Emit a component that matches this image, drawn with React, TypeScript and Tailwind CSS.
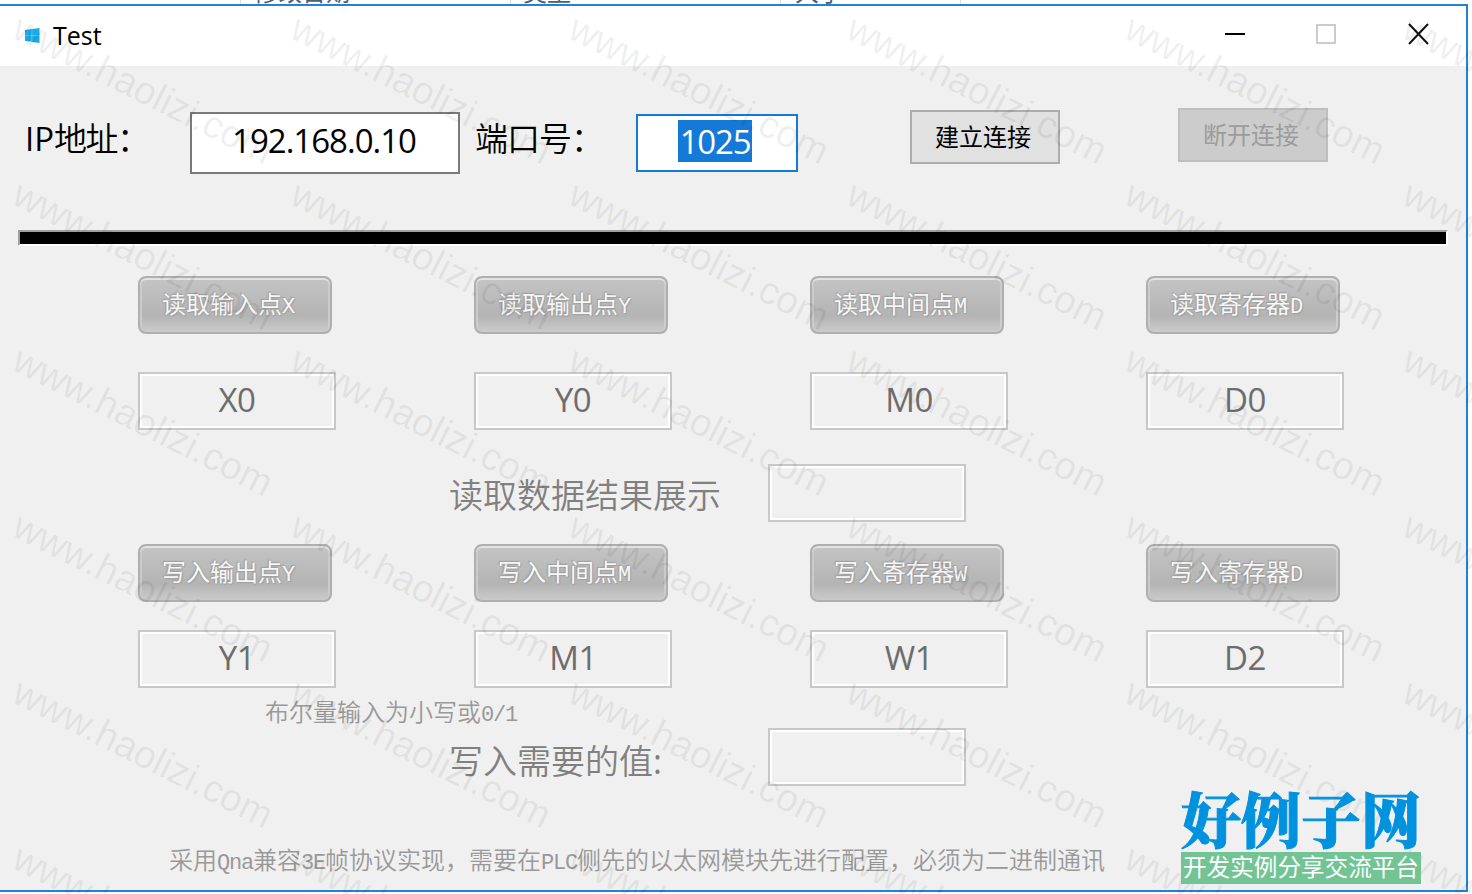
import { FC, ReactNode } from 'react';

interface Register {
  action: string;
  suffix: string;
  address: string;
}

const readRegisters: Register[] = [
  { action: '读取输入点', suffix: 'X', address: 'X0' },
  { action: '读取输出点', suffix: 'Y', address: 'Y0' },
  { action: '读取中间点', suffix: 'M', address: 'M0' },
  { action: '读取寄存器', suffix: 'D', address: 'D0' },
];

const writeRegisters: Register[] = [
  { action: '写入输出点', suffix: 'Y', address: 'Y1' },
  { action: '写入中间点', suffix: 'M', address: 'M1' },
  { action: '写入寄存器', suffix: 'W', address: 'W1' },
  { action: '写入寄存器', suffix: 'D', address: 'D2' },
];

const columns = [0, 1, 2, 3, 4, 5];
const rows = [0, 1, 2, 3, 4, 5];

// half-width latin characters, 12px each
const Half: FC<{ children: ReactNode }> = ({ children }) => (
  <span className="font-['Liberation_Mono',monospace] text-[22px] tracking-[-1.2px]">{children}</span>
);

const GlossyButton: FC<{ item: Register }> = ({ item }) => (
  <button
    type="button"
    disabled
    className="flex h-[58px] w-[194px] items-center rounded-lg border-2 border-[#afafaf] bg-linear-to-b from-[#c4c4c4] via-[#b4b4b4] via-70% to-[#cbcbcb] pl-[22px] text-2xl leading-6 whitespace-nowrap text-[#f7f7f7] shadow-[inset_0_2px_0_#e2e2e2,inset_2px_0_0_#cbcbcb,inset_-2px_0_0_#cbcbcb] text-shadow-[0_0_2px_#999,1px_1px_1px_#a2a2a2,-1px_-1px_1px_#a2a2a2]"
  >
    <span className="mt-0.5">
      {item.action}
      <Half>{item.suffix}</Half>
    </span>
  </button>
);

const DisabledField: FC<{ label: string; value?: string }> = ({ label, value = '' }) => (
  <input
    aria-label={label}
    disabled
    defaultValue={value}
    className="block h-[58px] w-[198px] border-2 border-[#c8c8c8] bg-[#f0f0f0] pb-1 text-center text-[33px] tracking-[-0.5px] text-[#6d6d6d] shadow-[inset_0_0_0_2px_#fff]"
  />
);

const RegisterGroup: FC<{ items: Register[]; fieldGap: string }> = ({ items, fieldGap }) => (
  <div className="flex gap-[138px] pl-[138px]">
    {items.map((item) => (
      <div key={item.address} className={`flex w-[198px] flex-col ${fieldGap}`}>
        <GlossyButton item={item} />
        <DisabledField label={item.action} value={item.address} />
      </div>
    ))}
  </div>
);

const TitleBar: FC = () => (
  <header className="flex h-[60px] items-center bg-white pl-[25px]">
    <svg width="15" height="15" viewBox="0 0 15 15" className="-mt-0.5">
      <path d="M0 2 6.8 1v6.2H0zM7.1.9 14.5 0v7.2H7.1zM0 7.6h6.8v6.2L0 13zM7.1 7.6h7.4V15l-7.4-1z" fill="#1aaae8" />
    </svg>
    <h1 className="-mt-[3px] ml-[13px] text-[25px] leading-8 text-black">Test</h1>
    <svg width="206" height="22" viewBox="0 0 206 22" fill="none" className="mr-[36px] ml-auto -mt-1">
      <path d="M1 11h20" stroke="#000" strokeWidth="2" />
      <path d="M93 2h18v18H93z" stroke="#ccc" strokeWidth="2" />
      <path d="m185 1 19 20M204 1 185 21" stroke="#111" strokeWidth="2" />
    </svg>
  </header>
);

const Watermark: FC = () => (
  <svg
    width="1472"
    height="894"
    className="pointer-events-none absolute top-0 left-0 font-['Liberation_Sans',sans-serif]"
  >
    {rows.map((row) =>
      columns.map((column) => (
        <text
          key={`${row}-${column}`}
          transform={`translate(${10 + column * 278} ${37 + row * 166}) rotate(26.7)`}
          fontSize="38.5"
          textLength="285"
          fill="#000"
          fillOpacity="0.07"
        >
          www.haolizi.com
        </text>
      )),
    )}
  </svg>
);

const App: FC = () => {
  return (
    <div className="relative h-[894px] w-[1472px] overflow-hidden bg-white font-['Open_Sans','Noto_Sans_CJK_SC',sans-serif]">
      {/* column headings of the list behind the window */}
      <div className="flex h-1 overflow-hidden pl-[240px] text-2xl text-[#4c607a]">
        <span className="-mt-[24px] h-8 w-[270px] border-l border-[#ddd] pl-[13px] leading-8">修改日期</span>
        <span className="-mt-[24px] h-8 w-[270px] border-l border-[#ddd] pl-[12px] leading-8">类型</span>
        <span className="-mt-[24px] h-8 w-[181px] border-x border-[#ddd] pl-[14px] leading-8">大小</span>
      </div>

      <main className="h-[888px] w-[1468px] border-y-2 border-r-2 border-[#2083d5] bg-[#f0f0f0]">
        <TitleBar />

        <section className="flex h-[164px] items-start pl-[25px] text-black">
          <label htmlFor="ip" className="mt-[49px] w-[165px] text-[33px] leading-[48px] font-[350] tracking-[-1.5px] whitespace-nowrap">
            <span className="font-normal tracking-normal">IP</span>地址：
          </label>
          <input
            id="ip"
            defaultValue="192.168.0.10"
            className="mt-[46px] h-[62px] w-[270px] border-2 border-[#7a7a7a] bg-white pr-0.5 pb-1.5 text-center text-[33px] tracking-[-1px]"
          />
          <span className="mt-[49px] ml-[15px] w-[161px] text-[33px] leading-[48px] font-[350] tracking-[-1px] whitespace-nowrap">
            端口号：
          </span>
          <div className="mt-[48px] flex h-[58px] w-[162px] justify-center border-2 border-[#1479d7] bg-white pt-1 pr-1">
            <span className="h-[42px] w-[74px] bg-[#1479d7] text-center text-[33px] leading-[44px] tracking-[-1.2px] text-white">
              1025
            </span>
          </div>
          <button
            type="button"
            className="mt-[44px] ml-[112px] h-[54px] w-[150px] border-2 border-[#adadad] bg-[#e1e1e1] pr-1 text-2xl leading-6 whitespace-nowrap"
          >
            建立连接
          </button>
          <button
            type="button"
            disabled
            className="mt-[42px] ml-[118px] h-[54px] w-[150px] border-2 border-[#bfbfbf] bg-[#ccc] pr-1 text-2xl leading-6 whitespace-nowrap text-[#9c9c9c]"
          >
            断开连接
          </button>
        </section>

        <div className="ml-[18px] h-4 w-[1430px] border-2 border-t-[#a0a0a0] border-r-white border-b-white border-l-[#a0a0a0] bg-black" />

        <section className="pt-[30px]">
          <RegisterGroup items={readRegisters} fieldGap="gap-[38px]" />
          <div className="mt-[34px] flex h-[58px] pl-[449px]">
            <span className="w-[319px] text-[34px] leading-[62px] font-[350] text-[#808080]">读取数据结果展示</span>
            <DisabledField label="读取数据结果展示" />
          </div>
        </section>

        <section className="pt-[22px]">
          <RegisterGroup items={writeRegisters} fieldGap="gap-[28px]" />
          <p className="h-10 pl-[265px] text-2xl leading-[48px] font-[350] text-[#999]">
            布尔量输入为小写或<Half>0/1</Half>
          </p>
          <div className="flex h-[58px] pl-[449px]">
            <span className="w-[319px] text-[34px] leading-[66px] font-[350] text-[#808080]">
              写入需要的值<span className="font-normal">:</span>
            </span>
            <DisabledField label="写入需要的值" />
          </div>
        </section>

        <p className="mt-[58px] pl-[169px] text-2xl leading-8 font-[350] whitespace-nowrap text-[#999]">
          采用<Half>Qna</Half>兼容<Half>3E</Half>帧协议实现，需要在<Half>PLC</Half>
          侧先的以太网模块先进行配置，必须为二进制通讯
        </p>
      </main>

      <Watermark />

      <div className="absolute top-[784px] left-[1181px] w-[240px] text-center whitespace-nowrap">
        <div className="h-[68px] font-['Noto_Serif_CJK_SC','Noto_Sans_CJK_SC',serif] text-[60px] leading-[66px] font-black text-[#0092df] [-webkit-text-stroke:1px_#0092df]">
          好例子网
        </div>
        <div className="h-8 bg-[#72c495] text-[23.6px] leading-[30px] text-white">开发实例分享交流平台</div>
      </div>
    </div>
  );
};

export default App;
